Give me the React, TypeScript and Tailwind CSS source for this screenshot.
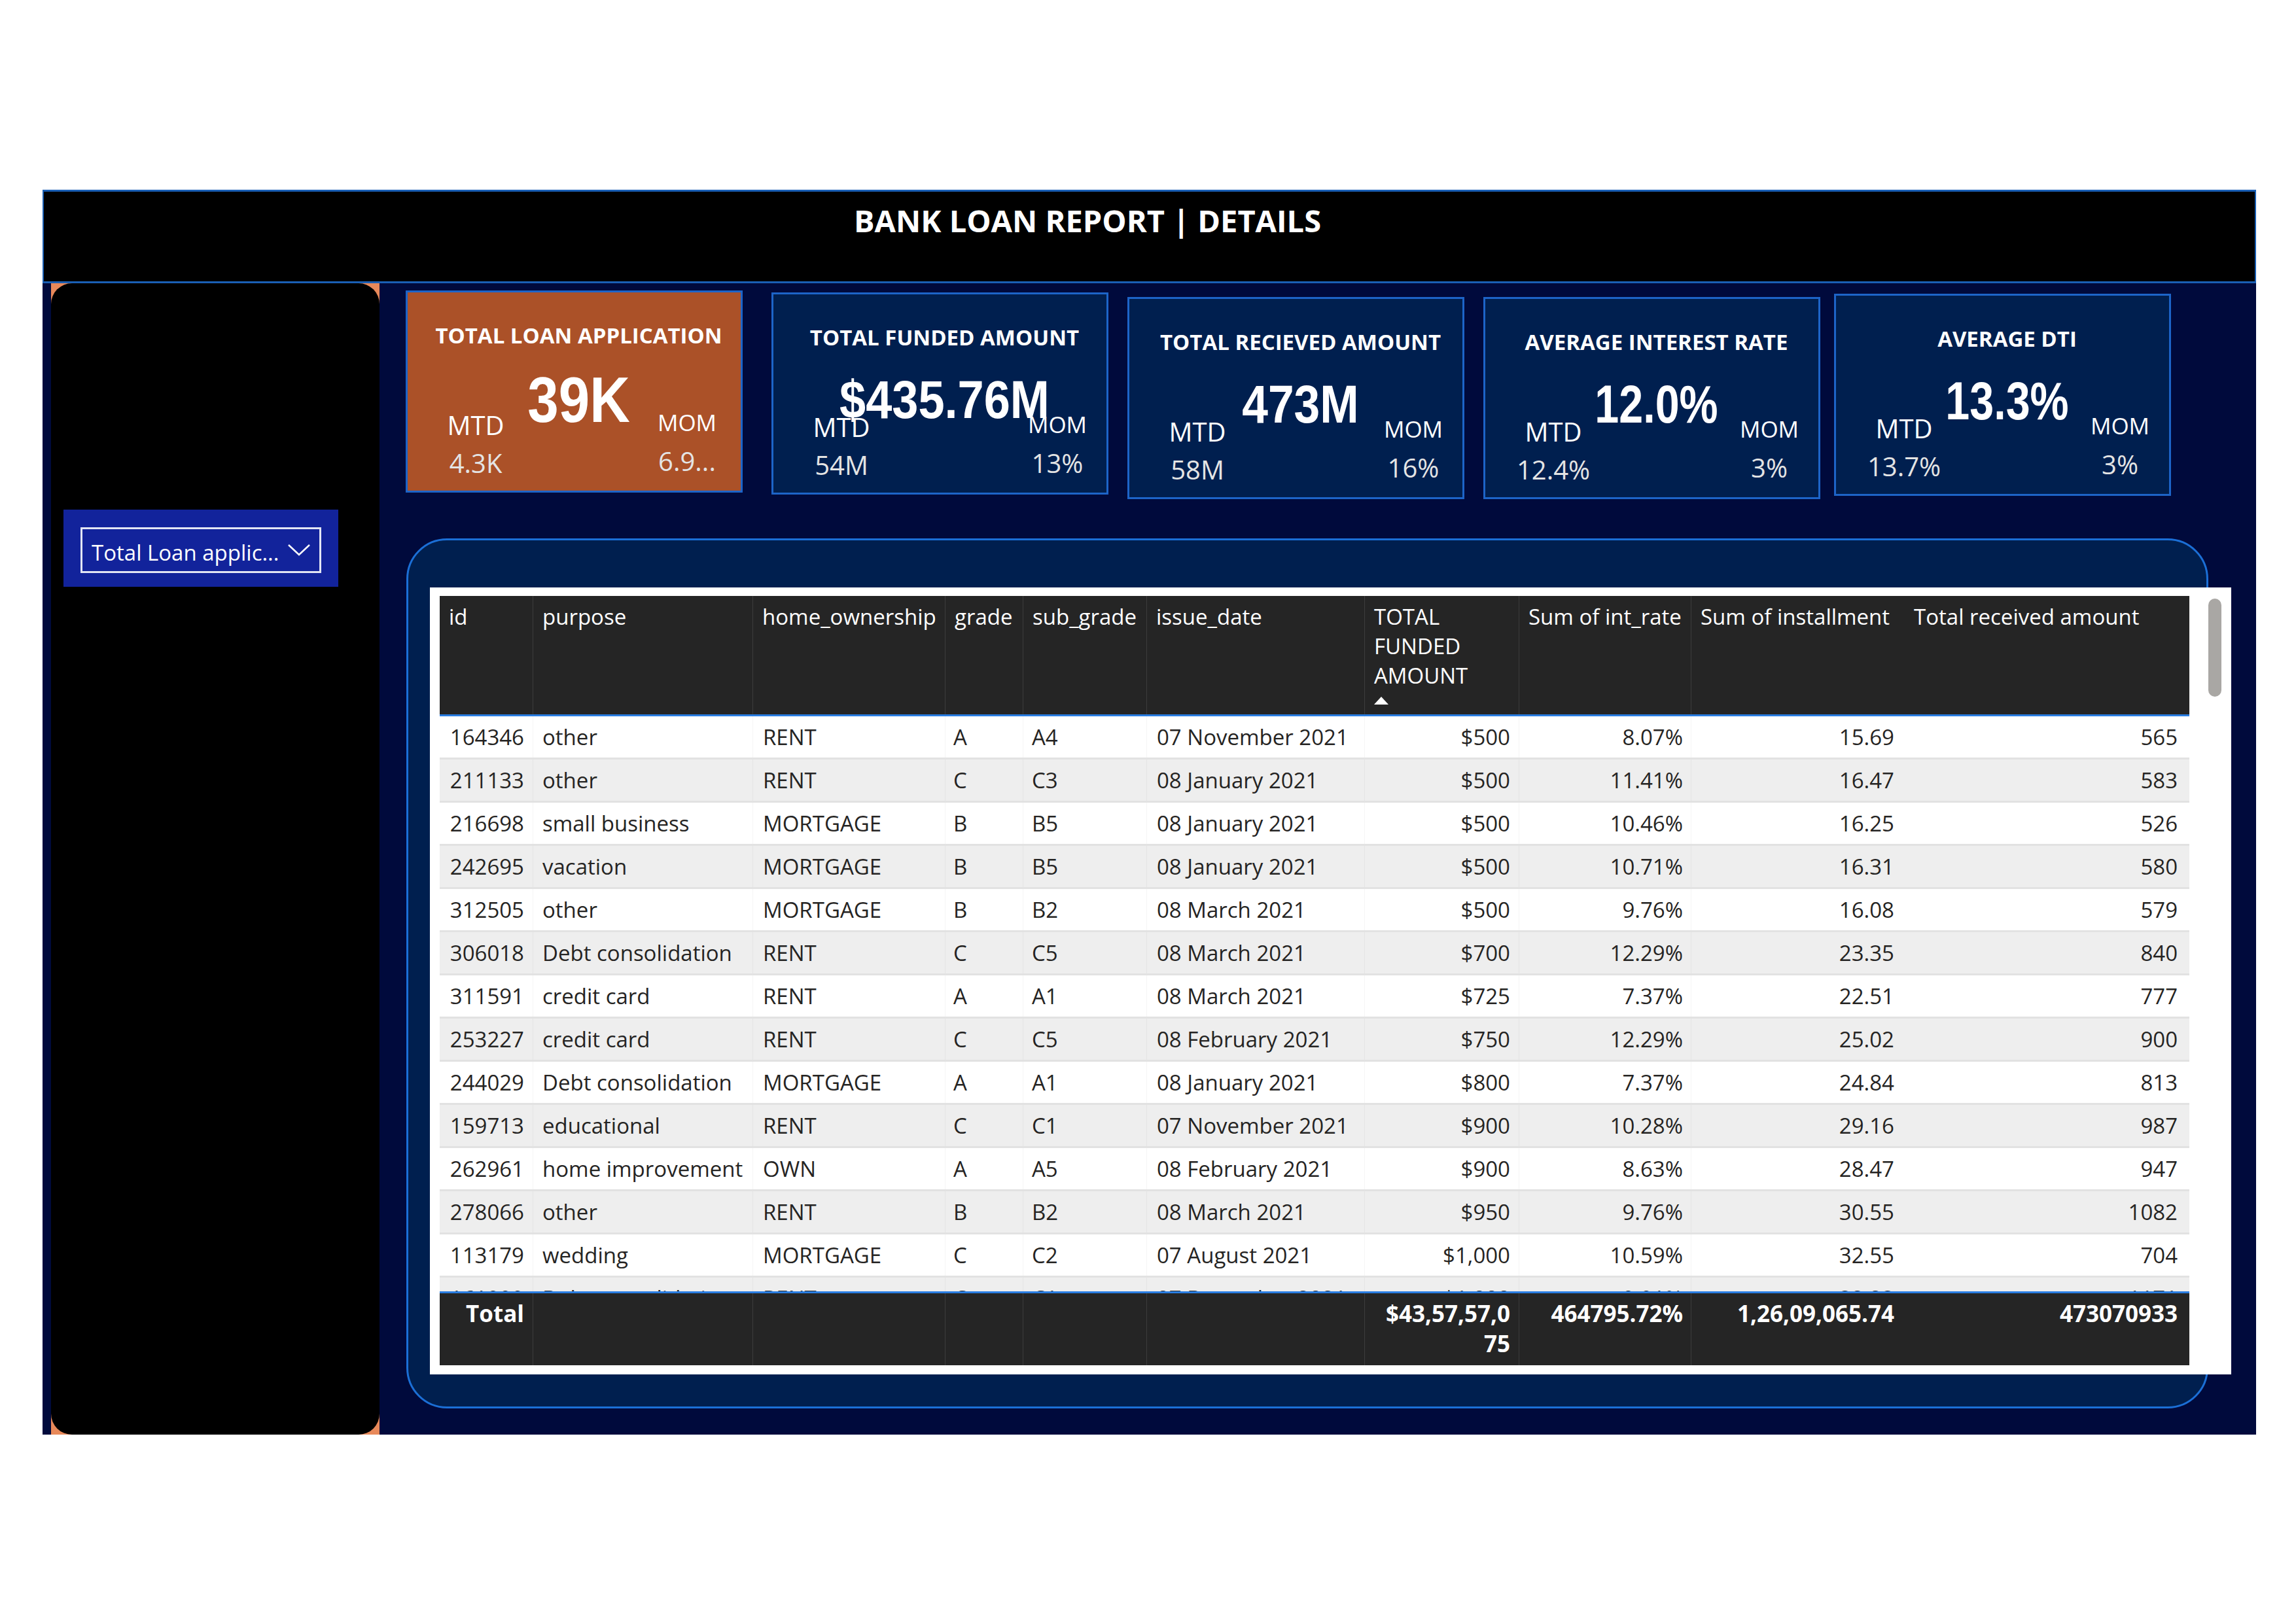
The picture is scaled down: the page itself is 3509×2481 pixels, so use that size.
import React from "react";

type Kpi = {
  title: string;
  value: string;
  mtd: string;
  mom: string;
  box: string;
  valueCls: string;
  momCls: string;
};

// values are drawn in a bold sans squeezed horizontally to get the condensed card look
const kpis: Kpi[] = [
  { title: "TOTAL LOAN APPLICATION", value: "39K", mtd: "4.3K", mom: "6.9...", box: "mt-[11px] bg-[#ab5128]", valueCls: "mt-[33px] text-[98px] scale-x-[0.87]", momCls: "mr-[12px]" },
  { title: "TOTAL FUNDED AMOUNT", value: "$435.76M", mtd: "54M", mom: "13%", box: "ml-[44px] mt-[14px] bg-[#001f4f]", valueCls: "mt-[38px] text-[82px] scale-x-[0.88]", momCls: "mr-[5px]" },
  { title: "TOTAL RECIEVED AMOUNT", value: "473M", mtd: "58M", mom: "16%", box: "ml-[29px] mt-[21px] bg-[#001f4f]", valueCls: "mt-[38px] text-[82px] scale-x-[0.87]", momCls: "mr-[5px]" },
  { title: "AVERAGE INTEREST RATE", value: "12.0%", mtd: "12.4%", mom: "3%", box: "ml-[29px] mt-[21px] bg-[#001f4f]", valueCls: "mt-[38px] text-[82px] scale-x-[0.81]", momCls: "mr-[5px]" },
  { title: "AVERAGE DTI", value: "13.3%", mtd: "13.7%", mom: "3%", box: "ml-[21px] mt-[16px] bg-[#001f4f]", valueCls: "mt-[38px] text-[82px] scale-x-[0.81]", momCls: "mr-[5px]" },
];

type Col = { w: string; head: string[]; num?: boolean; pad: string; line?: boolean; sort?: boolean };

const cols: Col[] = [
  { w: "w-[143px]", head: ["id"], num: true, pad: "pr-[13px]", line: true },
  { w: "w-[336px]", head: ["purpose"], pad: "pl-[14px]", line: true },
  { w: "w-[294px]", head: ["home_ownership"], pad: "pl-[15px]", line: true },
  { w: "w-[119px]", head: ["grade"], pad: "pl-[12px]", line: true },
  { w: "w-[189px]", head: ["sub_grade"], pad: "pl-[13px]", line: true },
  { w: "w-[333px]", head: ["issue_date"], pad: "pl-[15px]", line: true },
  { w: "w-[236px]", head: ["TOTAL", "FUNDED", "AMOUNT"], num: true, pad: "pr-[13px]", line: true, sort: true },
  { w: "w-[263px]", head: ["Sum of int_rate"], num: true, pad: "pr-[12px]", line: true },
  { w: "w-[326px]", head: ["Sum of installment"], num: true, pad: "pr-[16px]" },
  { w: "w-[435px]", head: ["Total received amount"], num: true, pad: "pr-[18px]" },
];

const rows: string[][] = [
  ["164346", "other", "RENT", "A", "A4", "07 November 2021", "$500", "8.07%", "15.69", "565"],
  ["211133", "other", "RENT", "C", "C3", "08 January 2021", "$500", "11.41%", "16.47", "583"],
  ["216698", "small business", "MORTGAGE", "B", "B5", "08 January 2021", "$500", "10.46%", "16.25", "526"],
  ["242695", "vacation", "MORTGAGE", "B", "B5", "08 January 2021", "$500", "10.71%", "16.31", "580"],
  ["312505", "other", "MORTGAGE", "B", "B2", "08 March 2021", "$500", "9.76%", "16.08", "579"],
  ["306018", "Debt consolidation", "RENT", "C", "C5", "08 March 2021", "$700", "12.29%", "23.35", "840"],
  ["311591", "credit card", "RENT", "A", "A1", "08 March 2021", "$725", "7.37%", "22.51", "777"],
  ["253227", "credit card", "RENT", "C", "C5", "08 February 2021", "$750", "12.29%", "25.02", "900"],
  ["244029", "Debt consolidation", "MORTGAGE", "A", "A1", "08 January 2021", "$800", "7.37%", "24.84", "813"],
  ["159713", "educational", "RENT", "C", "C1", "07 November 2021", "$900", "10.28%", "29.16", "987"],
  ["262961", "home improvement", "OWN", "A", "A5", "08 February 2021", "$900", "8.63%", "28.47", "947"],
  ["278066", "other", "RENT", "B", "B2", "08 March 2021", "$950", "9.76%", "30.55", "1082"],
  ["113179", "wedding", "MORTGAGE", "C", "C2", "07 August 2021", "$1,000", "10.59%", "32.55", "704"],
  ["161999", "Debt consolidation", "RENT", "C", "C1", "07 December 2021", "$1,000", "9.91%", "32.23", "1171"],
];

function KpiCard({ k }: { k: Kpi }) {
  return (
    <div className={`${k.box} flex h-[309px] w-[515px] shrink-0 flex-col border-[3px] border-[#1d64c8] pl-[14px] pt-[49px] text-white`}>
      <div className="whitespace-nowrap text-center text-[33px] font-bold leading-none">{k.title}</div>
      <div className="h-[99px]">
        <div className={`${k.valueCls} whitespace-nowrap text-center font-['Liberation_Sans',sans-serif] font-bold leading-none`}>
          {k.value}
        </div>
      </div>
      <div className="flex justify-between">
        <div className="ml-[20px] w-[140px] pt-[2px] text-center">
          <div className="text-[40px] leading-none">MTD</div>
          <div className="mt-[18px] text-[40px] leading-none text-[#e4e4e4]">{k.mtd}</div>
        </div>
        <div className={`${k.momCls} w-[140px] text-center`}>
          <div className="text-[35px] leading-none">MOM</div>
          <div className="mt-[22px] text-[40px] leading-none text-[#e4e4e4]">{k.mom}</div>
        </div>
      </div>
    </div>
  );
}

function LoanTable() {
  return (
    <div className="flex w-[2674px] flex-col">
      <div className="flex h-[181px] bg-[#252525]">
        {cols.map((c, i) => (
          <div key={i} className={`${c.w} h-full pl-[14px] pt-[9px] text-[33px] leading-[45px] text-white ${c.line ? "border-r border-[#3c3c3c]" : ""}`}>
            {c.head.map((h) => (
              <div key={h} className="whitespace-nowrap">{h}</div>
            ))}
            {c.sort ? (
              <svg className="mt-[10px]" width="22" height="12" viewBox="0 0 22 12">
                <polygon points="11,0 22,12 0,12" fill="#ffffff" />
              </svg>
            ) : null}
          </div>
        ))}
      </div>
      <div className="h-[3px] bg-[#2a7de1]" />
      <div className="h-[879px] overflow-hidden">
        {rows.map((r, ri) => (
          <div key={ri} className={`flex h-[66px] border-b-[3px] border-[#e2e2e2] ${ri % 2 === 0 ? "bg-white" : "bg-[#eeeeee]"}`}>
            {cols.map((c, ci) => (
              <div
                key={ci}
                className={`${c.w} ${c.pad} overflow-hidden whitespace-nowrap text-[33px] leading-[63px] text-[#252423] ${c.num ? "text-right" : "text-left"} ${c.line ? "border-r border-black/[0.04]" : ""}`}
              >
                {r[ci]}
              </div>
            ))}
          </div>
        ))}
      </div>
      <div className="h-[3px] bg-[#2a7de1]" />
      <div className="flex h-[110px] bg-[#252525] text-[35px] font-bold leading-[46px] text-white">
        {cols.map((c, ci) => {
          const totals: Record<number, React.ReactNode> = {
            0: "Total",
            6: (
              <>
                $43,57,57,0
                <br />
                75
              </>
            ),
            7: "464795.72%",
            8: "1,26,09,065.74",
            9: "473070933",
          };
          return (
            <div key={ci} className={`${c.w} ${c.num ? c.pad : ""} h-full whitespace-nowrap pt-[8px] text-right ${c.line ? "border-r border-[#3c3c3c]" : ""}`}>
              {totals[ci] ?? ""}
            </div>
          );
        })}
      </div>
    </div>
  );
}

export default function App() {
  return (
    <div className="h-[2481px] w-[3509px] bg-white pl-[65px] pt-[290px] font-['Open_Sans',sans-serif]">
      <div className="flex h-[1903px] w-[3383px] flex-col bg-[#000a3c]">
        {/* title bar */}
        <div className="h-[143px] border-x-2 border-b-[3px] border-t-[3px] border-[#1a5fb4] bg-black pl-[1238px] pt-[21px]">
          <h1 className="whitespace-nowrap text-[47px] font-bold leading-none text-white">BANK LOAN REPORT | DETAILS</h1>
        </div>

        <div className="flex flex-1 pl-[13px]">
          {/* filter panel */}
          <div className="h-full w-[502px] shrink-0 bg-[#e8895a]">
            <div className="h-full rounded-[32px] bg-black pl-[19px] pt-[346px]">
              <div className="h-[118px] w-[420px] bg-[#12239b] pl-[26px] pt-[27px]">
                <div className="flex h-[70px] w-[368px] items-center justify-between border-[3px] border-[#e2e5f4] pl-[14px] pr-[14px]">
                  <span className="mt-[6px] whitespace-nowrap text-[33px] leading-none text-white">Total Loan applic...</span>
                  <svg width="34" height="18" viewBox="0 0 34 18">
                    <polyline points="1,1 17,16 33,1" fill="none" stroke="#ffffff" strokeWidth="2.5" />
                  </svg>
                </div>
              </div>
            </div>
          </div>

          {/* kpis + details */}
          <div className="flex flex-1 flex-col pl-[40px]">
            <div className="flex h-[330px] items-start">
              {kpis.map((k) => (
                <KpiCard key={k.title} k={k} />
              ))}
            </div>
            <div className="ml-[1px] mt-[60px] h-[1330px] w-[2754px] rounded-[62px] border-[3px] border-[#1b6fd6] bg-[#001f4f] pl-[33px] pt-[72px]">
              <div className="flex h-[1203px] w-[2753px] items-start bg-white pl-[15px] pt-[13px]">
                <LoanTable />
                <div className="ml-[29px] mt-[4px] h-[150px] w-[20px] rounded-full bg-[#a9a7a4]" />
              </div>
            </div>
          </div>
        </div>
      </div>
    </div>
  );
}
